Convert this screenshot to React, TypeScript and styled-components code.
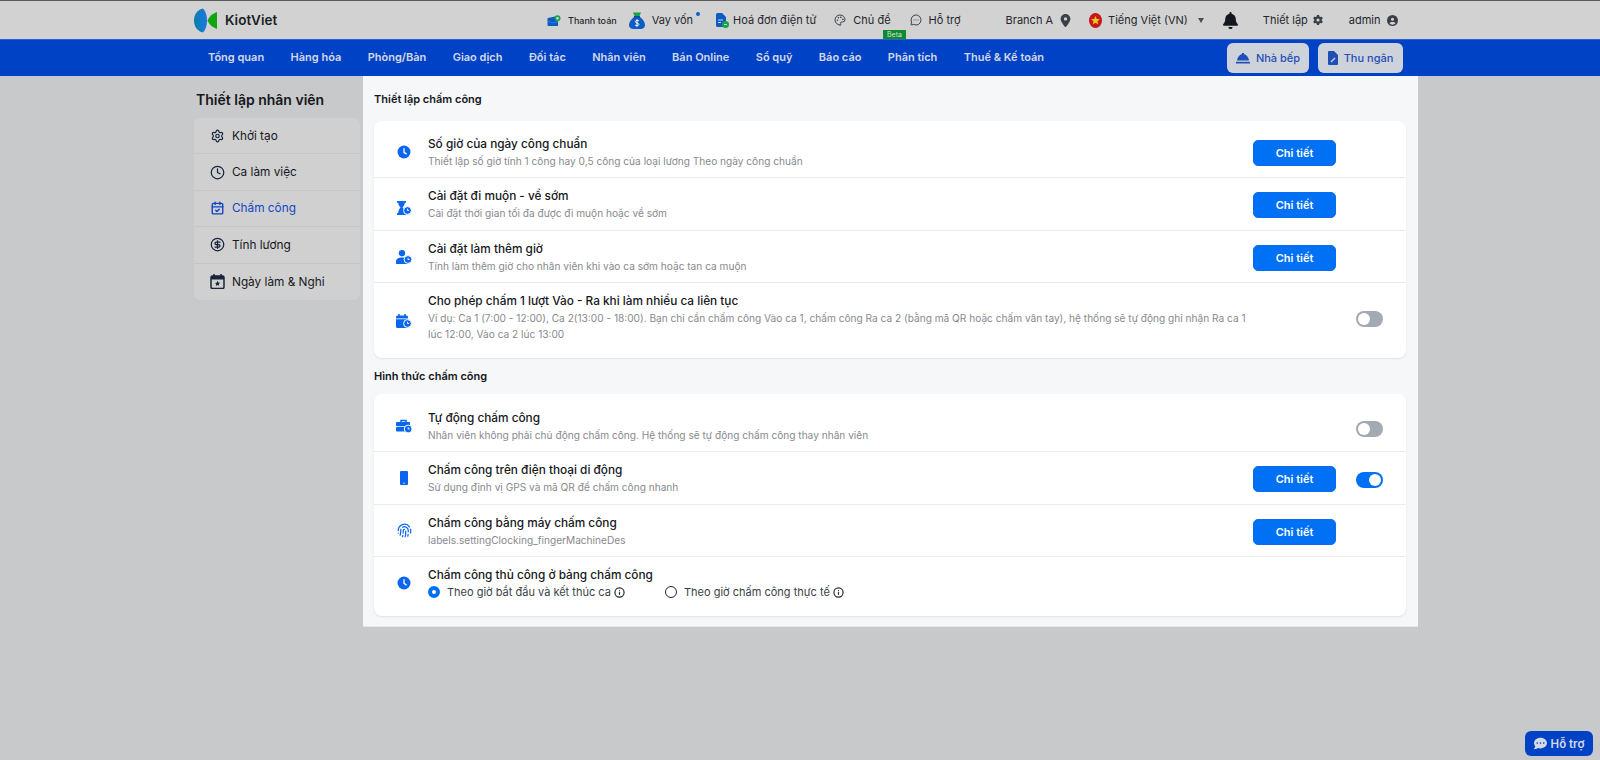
import React from "react";
import styled, { createGlobalStyle } from "styled-components";
import { Settings, Clock, CalendarCheck, CircleDollarSign, Palette, MessageCircleMore, Info, Fingerprint } from "lucide-react";
import { FaLocationDot, FaBell, FaGear, FaCircleUser, FaCommentDots } from "react-icons/fa6";

const Global = createGlobalStyle`
  html, body { margin: 0; padding: 0; background: #c8c9cb; }
  body { font-family: Inter, "Noto Sans", sans-serif; color: #111; height: 760px; overflow: hidden; }
  * { box-sizing: border-box; }
`;

const Page = styled.div`
  width: 1600px;
  height: 760px;
  background: #c8c9cb;
  position: relative;
`;
const TopBar = styled.header`
  height: 39px;
  background: #d2d2d2;
  border-top: 1px solid #5b5b5b;
  display: flex;
  align-items: center;
  padding-left: 194px;
  position: relative;
`;
const LogoBox = styled.div`
  display: flex;
  align-items: center;
  gap: 7px;
  width: 353px;
`;
const LogoText = styled.span`
  font-size: 13.500px;
  font-weight: 600;
  color: #1a1f25;
`;
const TopItem = styled.div<{ $ml?: number; $size?: number; $weight?: number; $gap?: number }>`
  display: flex;
  align-items: center;
  gap: ${(p) => p.$gap ?? 7}px;
  margin-left: ${(p) => p.$ml ?? 0}px;
  font-size: ${(p) => p.$size ?? 11}px;
  font-weight: ${(p) => p.$weight ?? 400};
  color: #23272d;
  white-space: nowrap;
  position: relative;
  svg { flex: none; }
`;
const Dot = styled.span`
  position: absolute;
  right: -7px;
  top: 0;
  width: 4px;
  height: 4px;
  border-radius: 50%;
  background: #0a62c8;
`;
const Beta = styled.span`
  position: absolute;
  left: 883px;
  top: 29px;
  width: 23px;
  height: 9px;
  background: #0f8a2f;
  color: #cfe3d4;
  font-size: 7px;
  line-height: 9px;
  text-align: center;
`;
const Caret = styled.span`
  width: 0;
  height: 0;
  border-left: 3.500px solid transparent;
  border-right: 3.500px solid transparent;
  border-top: 5px solid #4a4f57;
  margin-left: 4px;
`;
const NavBar = styled.nav`
  height: 37px;
  background: #0042c6;
  border-top: 1px solid #2f5dca;
  display: flex;
  align-items: center;
  padding: 0 0 2px 208px;
  gap: 26.400px;
  position: relative;
`;
const NavLink = styled.span`
  font-size: 11px;
  font-weight: 600;
  color: #d3d9e6;
  white-space: nowrap;
`;
const NavButtons = styled.div`
  position: absolute;
  left: 1227px;
  top: 3px;
  display: flex;
  gap: 9px;
`;
const NavButton = styled.div<{ $w: number }>`
  width: ${(p) => p.$w}px;
  height: 30px;
  border-radius: 6px;
  background: #ced2da;
  color: #1f4fb5;
  font-size: 11px;
  font-weight: 500;
  display: flex;
  align-items: center;
  justify-content: center;
  gap: 6px;
`;
const Body = styled.div`
  display: flex;
  align-items: flex-start;
  padding-left: 194px;
`;
const Side = styled.aside`
  width: 169px;
  padding-top: 14px;
`;
const SideTitle = styled.h2`
  margin: 0 0 8px 2px;
  font-size: 14px;
  line-height: 20px;
  font-weight: 600;
  color: #15181c;
`;
const SideCard = styled.div`
  width: 166px;
  background: #d0d0d0;
  border-radius: 6px;
  overflow: hidden;
`;
const SideRow = styled.div<{ $active?: boolean }>`
  height: 36.400px;
  display: flex;
  align-items: center;
  gap: 7px;
  padding-left: 16px;
  font-size: 11.800px;
  font-weight: 400;
  color: ${(p) => (p.$active ? "#1146c4" : "#15181c")};
  border-bottom: 1px solid #c5c6c8;
  &:last-child { border-bottom: 0; }
  svg { flex: none; width: 15px; }
`;
const Panel = styled.main`
  width: 1055px;
  height: 551px;
  background: #f6f7f9;
  padding: 0 12px 0 11px;
  border-bottom: 1px solid #e4e5e8;
`;
const SectionTitle = styled.h3<{ $h: number }>`
  margin: 0;
  height: ${(p) => p.$h}px;
  display: flex;
  align-items: center;
  font-size: 11px;
  font-weight: 600;
  color: #15181c;
`;
const Card = styled.section<{ $pad: number }>`
  background: #fff;
  border-radius: 8px;
  box-shadow: 0 1px 2px rgba(30, 40, 60, 0.1);
  & > div:first-child { padding-top: ${(p) => p.$pad}px; }
`;
const Row = styled.div`
  display: grid;
  grid-template-columns: 54px 825px 83px 47px;
  align-items: center;
  padding: 9px 0 8.500px;
  border-bottom: 1px solid #e9ebf0;
  &:last-child { border-bottom: 0; padding-bottom: 16px; }
`;
const IconCell = styled.div<{ $mt?: number }>`
  margin-left: 22px;
  margin-top: ${(p) => p.$mt ?? 0}px;
  width: 16px;
  height: 16px;
  display: flex;
  align-items: center;
  justify-content: center;
  color: #0a66ee;
`;
const TextCell = styled.div``;
const RowTitle = styled.div`
  font-size: 11.800px;
  line-height: 18px;
  font-weight: 500;
  color: #15181c;
`;
const RowDesc = styled.div`
  font-size: 10.140px;
  line-height: 16px;
  color: #888a8e;
`;
const DetailButton = styled.button`
  width: 83px;
  height: 26px;
  margin-top: 2px;
  border: 1px solid #0c6cf0;
  border-radius: 5px;
  background: #0070f4;
  color: #fff;
  font-family: inherit;
  font-size: 11px;
  font-weight: 600;
  padding: 0;
`;
const Toggle = styled.div<{ $on?: boolean; $mt?: number }>`
  grid-column: 4;
  justify-self: end;
  margin-top: ${(p) => p.$mt ?? 0}px;
  width: 27px;
  height: 16px;
  border-radius: 8px;
  background: ${(p) => (p.$on ? "#0070f4" : "#a4aab3")};
  padding: 2px;
  display: flex;
  justify-content: ${(p) => (p.$on ? "flex-end" : "flex-start")};
  &::after {
    content: "";
    width: 12px;
    height: 12px;
    border-radius: 50%;
    background: #fff;
  }
`;
const RadioRow = styled.div`
  display: flex;
  align-items: center;
  height: 16px;
`;
const RadioOption = styled.div<{ $w: number }>`
  width: ${(p) => p.$w}px;
  display: flex;
  align-items: center;
  font-size: 11px;
  color: #3a3f46;
  gap: 3px;
`;
const Radio = styled.span<{ $on?: boolean }>`
  width: 12px;
  height: 12px;
  border-radius: 50%;
  margin-right: 4px;
  background: #fff;
  border: ${(p) => (p.$on ? "4px solid #0070f4" : "1.300px solid #24282e")};
`;
const Help = styled.div`
  position: absolute;
  left: 1525px;
  top: 731px;
  width: 68px;
  height: 25px;
  border-radius: 6px;
  background: #0042c6;
  color: #d3d9e6;
  font-size: 11.500px;
  font-weight: 600;
  display: flex;
  align-items: center;
  justify-content: center;
  gap: 4px;
`;

const Logo = () => (
  <svg width="24" height="25" viewBox="0 0 24 25">
    <defs>
      <linearGradient id="lg" x1="0" x2="1">
        <stop offset="0" stopColor="#0a7fa8" />
        <stop offset="1" stopColor="#1b78e0" />
      </linearGradient>
    </defs>
    <path d="M9 0.500C3.500 1.500 0 6.500 0 12.500s3.500 11 9 12c3-3 4-7.500 4-12s-1-9-4-12z" fill="url(#lg)" />
    <path d="M23 4v17c-4.500-1.500-8-4.500-9.500-8.500C15 8.500 18.500 5.500 23 4z" fill="#12a512" />
  </svg>
);
const Wallet = () => (
  <svg width="14" height="11" viewBox="0 0 14 11">
    <path d="M1 3l7-1.500V3h3v8H1.500A1 1 0 0 1 .5 10V3.500z" fill="#0c5cc4" />
    <path d="M1 6.500l6 1.500 4-1.500" stroke="#3f80d4" strokeWidth="0.800" fill="none" />
    <circle cx="10.500" cy="3.200" r="3" fill="#17a34a" />
    <circle cx="10.500" cy="3.200" r="1.300" fill="#d2d2d2" />
  </svg>
);
const Sack = () => (
  <svg width="16" height="17" viewBox="0 0 16 17">
    <path d="M5.500 4.500C2.500 7 0 10 0 13c0 2.500 2 4 4.500 4h7c2.500 0 4.500-1.500 4.500-4 0-3-2.500-6-5.500-8.500z" fill="#0c5cc4" />
    <path d="M4 0.500h8L10.500 4h-5z" fill="#17a34a" />
    <rect x="5" y="4" width="6" height="1.200" fill="#0a4aa0" />
    <path d="M10 9c-.5-.8-3.500-1-3.700.5C6.100 11.200 10 10.800 9.900 12.500 9.800 14 6.500 13.800 6 13M8 7.300v7.500" stroke="#fff" strokeWidth="1" fill="none" />
  </svg>
);
const Invoice = () => (
  <svg width="13" height="15" viewBox="0 0 13 15">
    <path d="M0 1.500A1.500 1.500 0 0 1 1.500 0H6l4 4v10H1.500A1.500 1.500 0 0 1 0 12.500z" fill="#0c5cc4" />
    <path d="M2 7h5M2 9.500h3" stroke="#d2d2d2" />
    <circle cx="9.500" cy="11.500" r="3.500" fill="#17a34a" />
    <path d="M8 11.500h3" stroke="#d2d2d2" />
  </svg>
);
const Flag = () => (
  <svg width="13" height="15" viewBox="0 0 13 15">
    <ellipse cx="6.500" cy="7.500" rx="6.500" ry="7.500" fill="#c4161c" />
    <path d="M6.500 3l1.300 3.100 3.200.2-2.500 2 .8 3.200-2.800-1.800-2.800 1.800.8-3.200-2.500-2 3.200-.2z" fill="#f5c518" />
  </svg>
);
const Kitchen = () => (
  <svg width="14" height="11" viewBox="0 0 14 11">
    <rect x="6" y="0" width="2" height="2" fill="#1f4fb5" />
    <path d="M7 1C3.800 1 1.500 4 1 7.500h12C12.500 4 10.200 1 7 1z" fill="#1f4fb5" />
    <rect x="0" y="8.800" width="14" height="1.700" fill="#1f4fb5" />
  </svg>
);
const Cashier = () => (
  <svg width="10" height="14" viewBox="0 0 10 14">
    <path d="M0 1a1 1 0 0 1 1-1h5l4 4v9a1 1 0 0 1-1 1H1a1 1 0 0 1-1-1z" fill="#1f4fb5" />
    <path d="M3 11l4-4" stroke="#ced2da" strokeWidth="1.400" />
  </svg>
);
const CalStar = () => (
  <svg width="14" height="15" viewBox="0 0 14 15">
    <rect x="0.500" y="2" width="13" height="12.500" rx="1.500" fill="none" stroke="#17243a" strokeWidth="1.500" />
    <rect x="0.500" y="2" width="13" height="3.500" fill="#17243a" />
    <path d="M3.500 0v3M10.500 0v3" stroke="#17243a" strokeWidth="1.500" />
    <path d="M7 6.800l.8 1.700 1.800.2-1.300 1.200.3 1.800L7 11l-1.600.9.300-1.800-1.300-1.200 1.800-.2z" fill="#17243a" />
  </svg>
);
const Badge = ({ cx, cy }: { cx: number; cy: number }) => (
  <g>
    <circle cx={cx} cy={cy} r="3.900" fill="#0a66ee" stroke="#fff" strokeWidth="1" />
    <path d={`M${cx} ${cy - 1.800}V${cy}h1.600`} stroke="#fff" strokeWidth="0.900" fill="none" />
  </g>
);
const ClockSolid = () => (
  <svg width="14" height="14" viewBox="0 0 14 14">
    <circle cx="7" cy="7" r="6.500" fill="#0a66ee" />
    <path d="M7 3.200V7.300l2.600 1.800" stroke="#fff" strokeWidth="1.300" fill="none" />
  </svg>
);
const Hourglass = () => (
  <svg width="16" height="14" viewBox="0 0 16 14">
    <path d="M1 0h9v1.800H8.800C8.800 4 7.500 5.300 6.500 6.500c1 1 2.300 2.400 2.300 4.200v1.500H10V14H1v-1.800h1.200c0-3 1.300-4.400 2.300-5.700-1-1.200-2.300-2.500-2.300-4.700H1z" fill="#0a66ee" />
    <Badge cx={11.500} cy={9.500} />
  </svg>
);
const UserClock = () => (
  <svg width="16" height="14" viewBox="0 0 16 14">
    <circle cx="6" cy="3.200" r="3.200" fill="#0a66ee" />
    <path d="M0 14v-2.500C0 9 2.500 7.500 6 7.500s6 1.500 6 4V14z" fill="#0a66ee" />
    <Badge cx={12} cy={9.500} />
  </svg>
);
const CalClock = () => (
  <svg width="16" height="14" viewBox="0 0 16 14">
    <rect x="0" y="1.500" width="12" height="12.500" rx="1.500" fill="#0a66ee" />
    <path d="M3 0v3M9 0v3" stroke="#0a66ee" strokeWidth="1.500" />
    <path d="M0 4.800h12" stroke="#fff" strokeWidth="0.800" />
    <Badge cx={11.500} cy={9.500} />
  </svg>
);
const CaseClock = () => (
  <svg width="16" height="14" viewBox="0 0 16 14">
    <path d="M5 3V1.500h5V3" stroke="#0a66ee" strokeWidth="1.500" fill="none" />
    <rect x="0" y="3" width="14" height="4.200" rx="1" fill="#0a66ee" />
    <rect x="0" y="8" width="14" height="4.500" rx="1" fill="#0a66ee" />
    <Badge cx={12.200} cy={10} />
  </svg>
);
const Phone = () => (
  <svg width="8" height="14" viewBox="0 0 8 14">
    <rect width="8" height="14" rx="1" fill="#0a66ee" />
    <rect x="3" y="11.700" width="2" height="1" fill="#a9c9fa" />
  </svg>
);

const nav = ["Tổng quan", "Hàng hóa", "Phòng/Bàn", "Giao dịch", "Đối tác", "Nhân viên", "Bán Online", "Sổ quỹ", "Báo cáo", "Phân tích", "Thuế & Kế toán"];

export default function App() {
  return (
    <Page>
      <Global />
      <TopBar>
        <LogoBox>
          <Logo />
          <LogoText>KiotViet</LogoText>
        </LogoBox>
        <TopItem $size={9} $weight={500}><Wallet />Thanh toán</TopItem>
        <TopItem $ml={12} $gap={7}><Sack />Vay vốn<Dot /></TopItem>
        <TopItem $ml={23} $gap={4}><Invoice />Hoá đơn điện tử</TopItem>
        <TopItem $ml={18}><Palette size={12} color="#3b4048" />Chủ đề</TopItem>
        <TopItem $ml={19}><MessageCircleMore size={12} color="#3b4048" />Hỗ trợ</TopItem>
        <TopItem $ml={45} $gap={6}>Branch A<FaLocationDot size={13} color="#3b4048" /></TopItem>
        <TopItem $ml={17} $gap={6}><Flag />Tiếng Việt (VN)<Caret /></TopItem>
        <TopItem $ml={18}><FaBell size={17} color="#14181e" /></TopItem>
        <TopItem $ml={24} $gap={5}>Thiết lập<FaGear size={10} color="#3b4048" /></TopItem>
        <TopItem $ml={26} $gap={6}>admin<FaCircleUser size={11} color="#3b4048" /></TopItem>
        <Beta>Beta</Beta>
      </TopBar>
      <NavBar>
        {nav.map((n) => <NavLink key={n}>{n}</NavLink>)}
        <NavButtons>
          <NavButton $w={82}><Kitchen />Nhà bếp</NavButton>
          <NavButton $w={85}><Cashier />Thu ngân</NavButton>
        </NavButtons>
      </NavBar>
      <Body>
        <Side>
          <SideTitle>Thiết lập nhân viên</SideTitle>
          <SideCard>
            <SideRow><Settings size={14} color="#17243a" />Khởi tạo</SideRow>
            <SideRow><Clock size={15} color="#17243a" />Ca làm việc</SideRow>
            <SideRow $active><CalendarCheck size={14} color="#1146c4" strokeWidth={2.4} />Chấm công</SideRow>
            <SideRow><CircleDollarSign size={15} color="#17243a" />Tính lương</SideRow>
            <SideRow><CalStar />Ngày làm &amp; Nghi</SideRow>
          </SideCard>
        </Side>
        <Panel>
          <SectionTitle $h={45}>Thiết lập chấm công</SectionTitle>
          <Card $pad={13.5}>
            <Row>
              <IconCell><ClockSolid /></IconCell>
              <TextCell>
                <RowTitle>Số giờ của ngày công chuẩn</RowTitle>
                <RowDesc>Thiết lập số giờ tính 1 công hay 0,5 công của loại lương Theo ngày công chuẩn</RowDesc>
              </TextCell>
              <DetailButton>Chi tiết</DetailButton>
            </Row>
            <Row>
              <IconCell $mt={8}><Hourglass /></IconCell>
              <TextCell>
                <RowTitle>Cài đặt đi muộn - về sớm</RowTitle>
                <RowDesc>Cài đặt thời gian tối đa được đi muộn hoặc về sớm</RowDesc>
              </TextCell>
              <DetailButton>Chi tiết</DetailButton>
            </Row>
            <Row>
              <IconCell><UserClock /></IconCell>
              <TextCell>
                <RowTitle>Cài đặt làm thêm giờ</RowTitle>
                <RowDesc>Tính làm thêm giờ cho nhân viên khi vào ca sớm hoặc tan ca muộn</RowDesc>
              </TextCell>
              <DetailButton>Chi tiết</DetailButton>
            </Row>
            <Row>
              <IconCell $mt={8}><CalClock /></IconCell>
              <TextCell>
                <RowTitle>Cho phép chấm 1 lượt Vào - Ra khi làm nhiều ca liên tục</RowTitle>
                <RowDesc>Ví dụ: Ca 1 (7:00 - 12:00), Ca 2(13:00 - 18:00). Bạn chỉ cần chấm công Vào ca 1, chấm công Ra ca 2 (bằng mã QR hoặc chấm vân tay), hệ thống sẽ tự động ghi nhận Ra ca 1 lúc 12:00, Vào ca 2 lúc 13:00</RowDesc>
              </TextCell>
              <Toggle $mt={4} />
            </Row>
          </Card>
          <SectionTitle $h={35.5}>Hình thức chấm công</SectionTitle>
          <Card $pad={15}>
            <Row>
              <IconCell><CaseClock /></IconCell>
              <TextCell>
                <RowTitle>Tự động chấm công</RowTitle>
                <RowDesc>Nhân viên không phải chủ động chấm công. Hệ thống sẽ tự động chấm công thay nhân viên</RowDesc>
              </TextCell>
              <Toggle $mt={6} />
            </Row>
            <Row>
              <IconCell><Phone /></IconCell>
              <TextCell>
                <RowTitle>Chấm công trên điện thoại di động</RowTitle>
                <RowDesc>Sử dụng định vị GPS và mã QR để chấm công nhanh</RowDesc>
              </TextCell>
              <DetailButton>Chi tiết</DetailButton>
              <Toggle $on $mt={4} />
            </Row>
            <Row>
              <IconCell><Fingerprint size={15} /></IconCell>
              <TextCell>
                <RowTitle>Chấm công bằng máy chấm công</RowTitle>
                <RowDesc>labels.settingClocking_fingerMachineDes</RowDesc>
              </TextCell>
              <DetailButton>Chi tiết</DetailButton>
            </Row>
            <Row>
              <IconCell><ClockSolid /></IconCell>
              <TextCell>
                <RowTitle>Chấm công thủ công ở bảng chấm công</RowTitle>
                <RadioRow>
                  <RadioOption $w={237}><Radio $on />Theo giờ bắt đầu và kết thúc ca<Info size={11} color="#24282e" strokeWidth={2.6} /></RadioOption>
                  <RadioOption $w={200}><Radio />Theo giờ chấm công thực tế<Info size={11} color="#24282e" strokeWidth={2.6} /></RadioOption>
                </RadioRow>
              </TextCell>
            </Row>
          </Card>
        </Panel>
      </Body>
      <Help><FaCommentDots size={13} />Hỗ trợ</Help>
    </Page>
  );
}
